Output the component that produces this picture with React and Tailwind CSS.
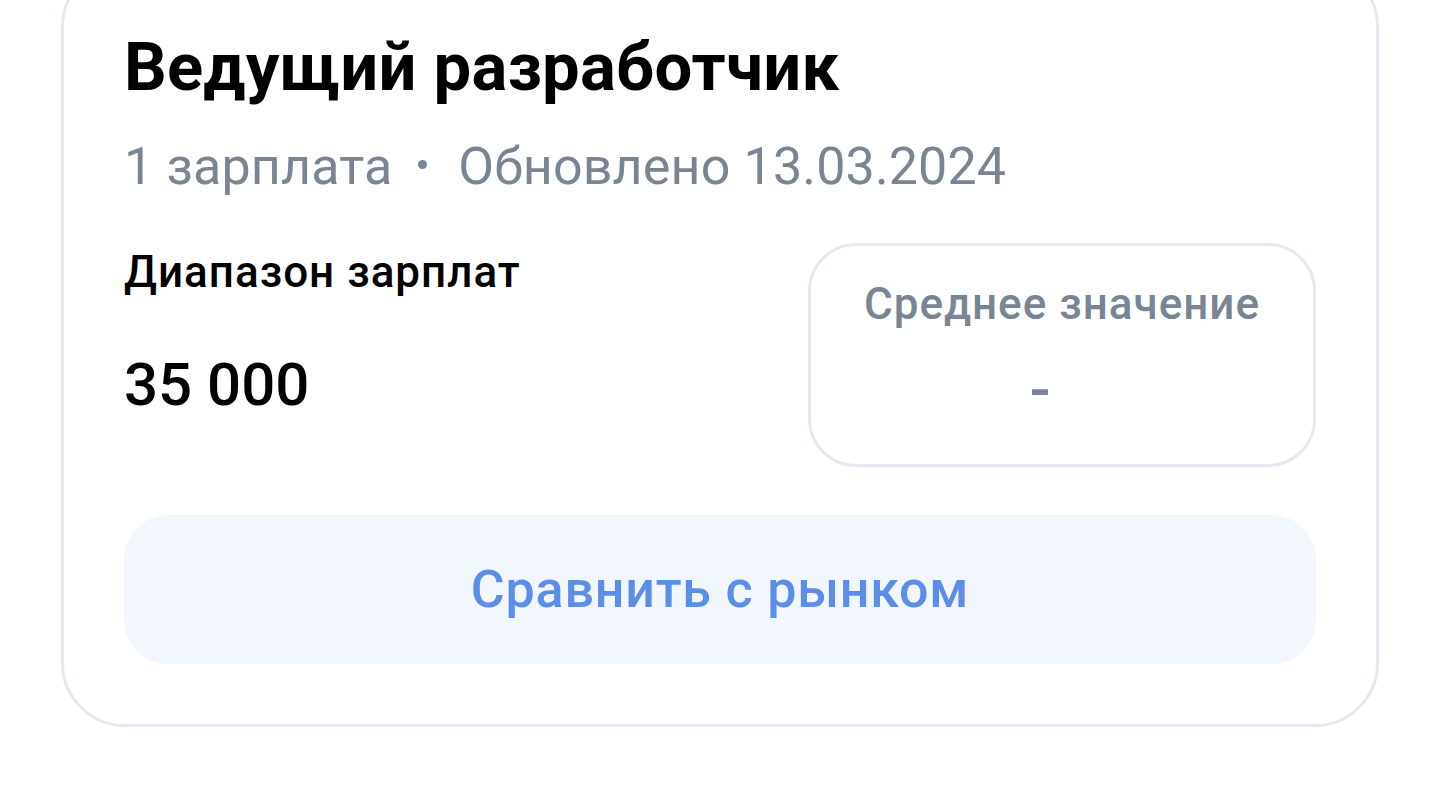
export default function App() {
  return (
    <div className="min-h-screen bg-white overflow-hidden font-['Roboto',sans-serif]">
      <div className="mx-[61px] -mt-[37px] rounded-[64px] border-[3px] border-[#e3e9f1] bg-white px-[60px] pt-[61px] pb-[60px]">
        {/* Title */}
        <h1 className="text-[67px] leading-[80px] font-bold text-black tracking-[0.2px]">
          Ведущий разработчик
        </h1>
        <p className="mt-[30px] flex items-center text-[52px] leading-[60px] tracking-[0.15px] text-[#7a8594]">
          <span>1 зарплата</span>
          <span className="ml-[26px] mr-[31px] mb-[6px] inline-block h-[9px] w-[9px] rounded-full bg-[#7a8594]" />
          <span>Обновлено 13.03.2024</span>
        </p>

        {/* Range + average */}
        <div className="mt-[46px] flex items-start justify-between">
          <div className="pt-[3px]">
            <div className="text-[44px] leading-[52px] tracking-[1px] font-medium text-black">
              Диапазон зарплат
            </div>
            <div className="mt-[52px] text-[60px] leading-[70px] font-medium text-black">
              35 000
            </div>
          </div>
          <div className="flex h-[224px] w-[508px] flex-col items-center rounded-[48px] border-[3px] border-[#e3e9f1] pt-[32px]">
            <div className="text-[44px] leading-[52px] tracking-[1px] font-medium text-[#7a8594]">
              Среднее значение
            </div>
            <div className="mt-[25px] mr-[44px] text-[62px] leading-[70px] font-medium text-[#7a8594]">
              -
            </div>
          </div>
        </div>

        {/* Compare button */}
        <button className="mt-[48px] flex h-[149px] w-full items-center justify-center rounded-[44px] bg-[#f2f7fd] text-[52px] tracking-[0.8px] font-medium text-[#5b8ee8]">
          Сравнить с рынком
        </button>
      </div>
    </div>
  );
}
